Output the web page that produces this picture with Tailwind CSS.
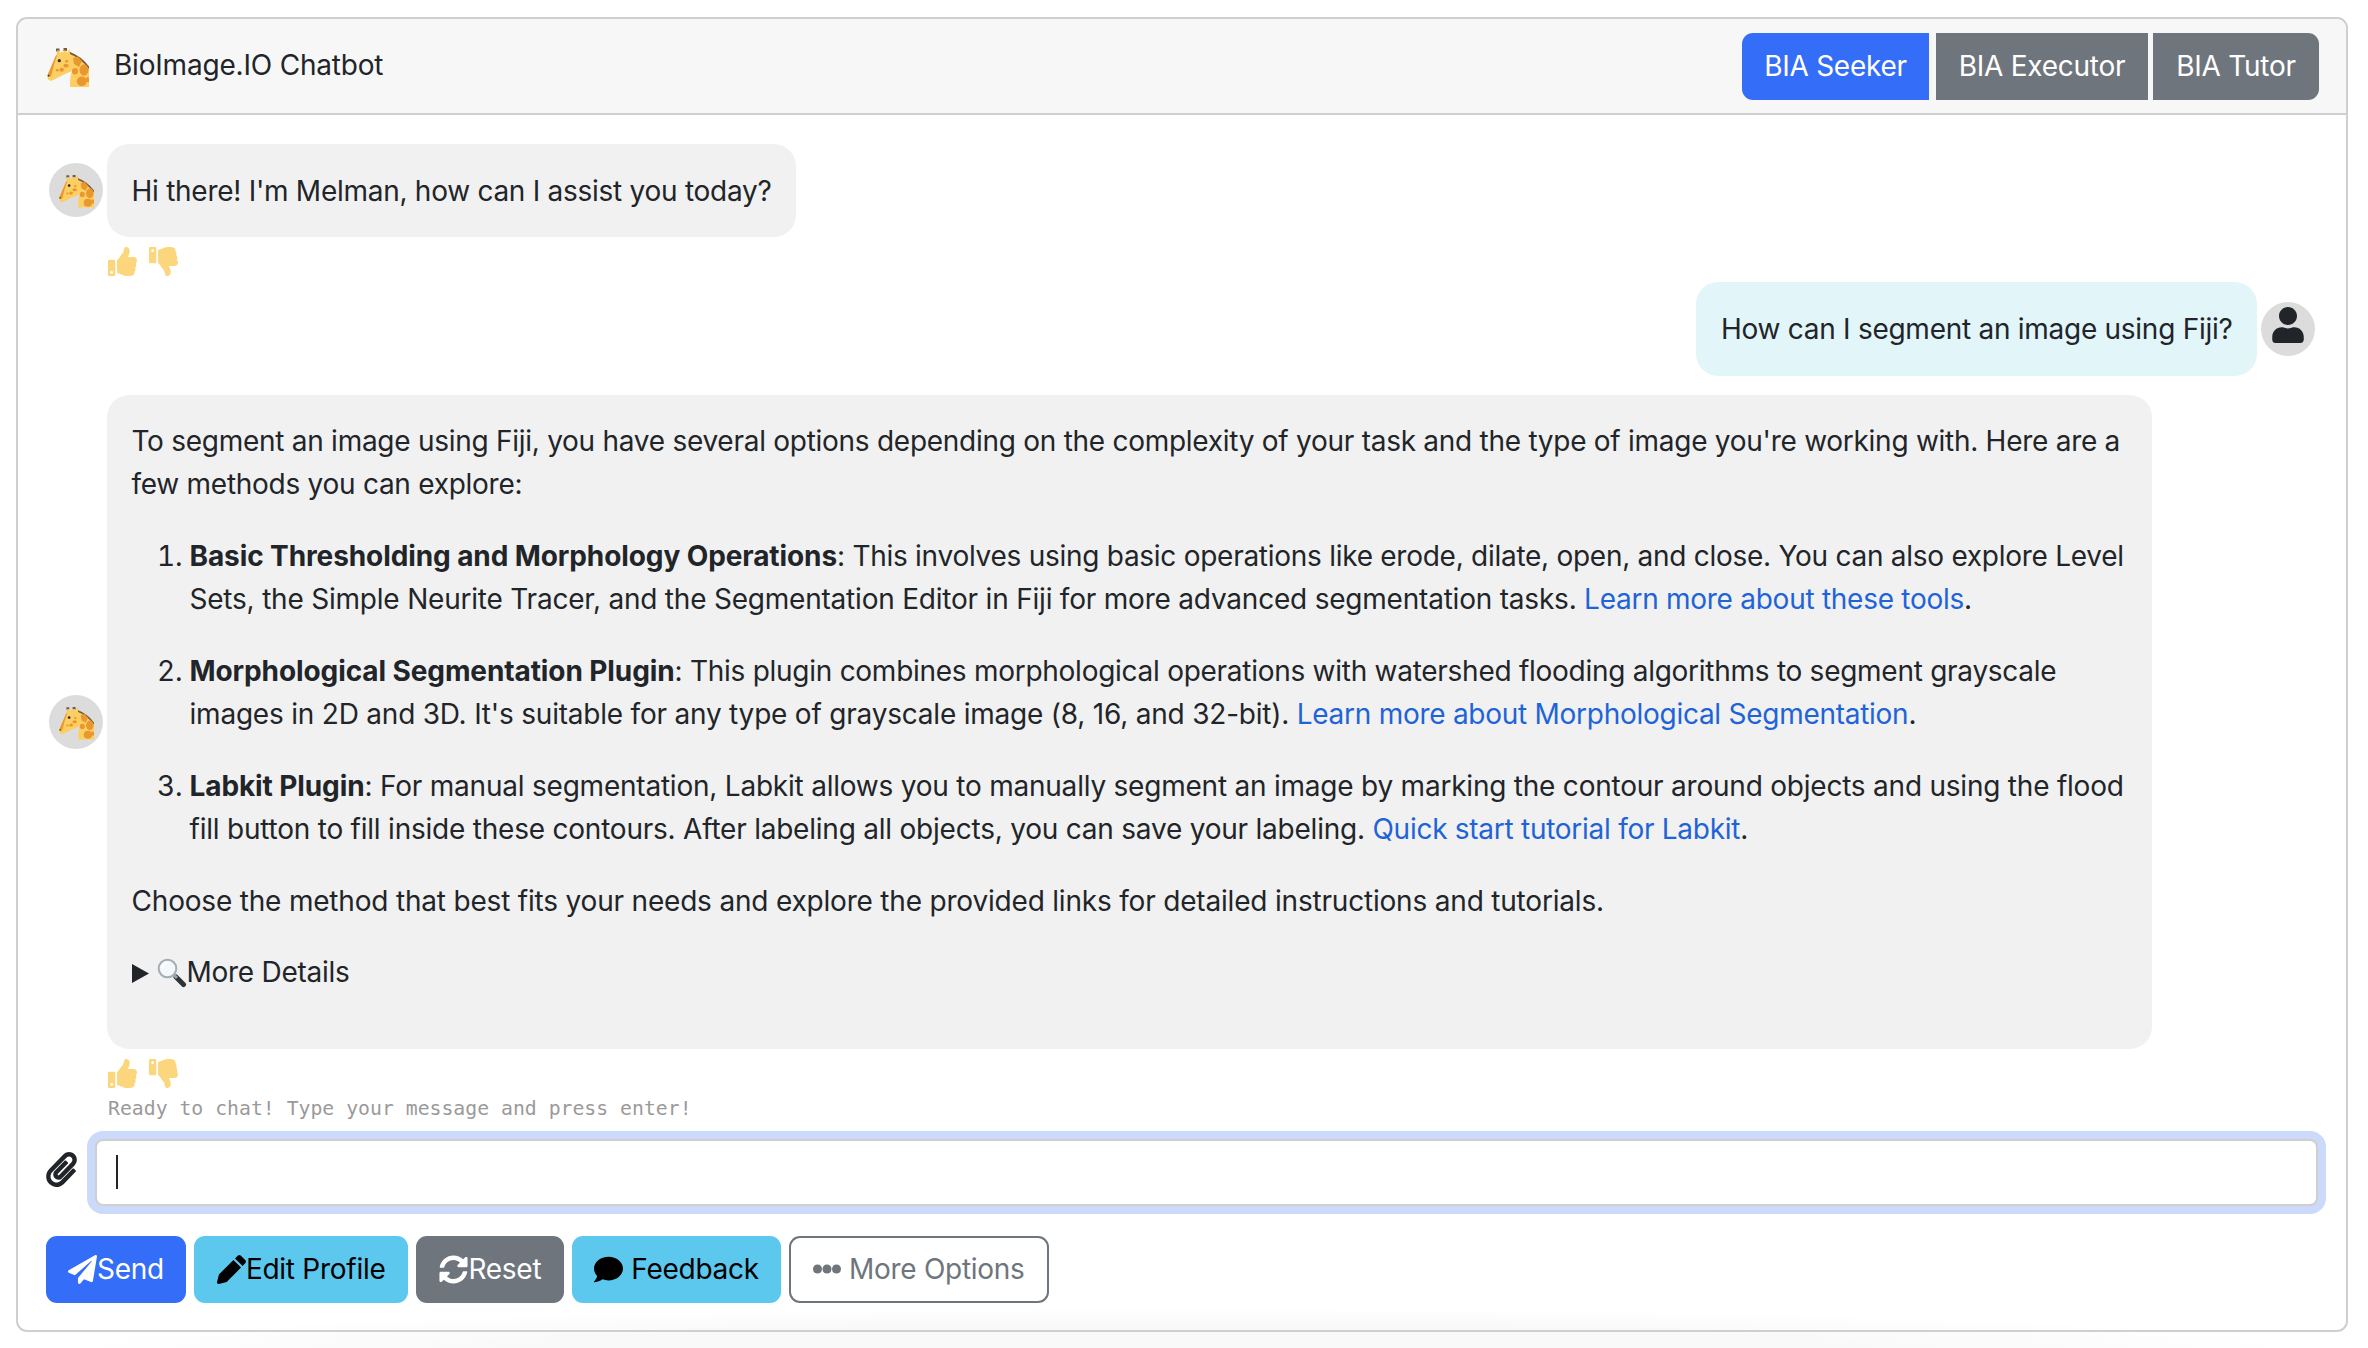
<!DOCTYPE html>
<html lang="en">
<head>
<meta charset="utf-8">
<title>BioImage.IO Chatbot</title>
<script src="https://cdn.jsdelivr.net/npm/@tailwindcss/browser@4"></script>
</head>
<body class="h-[1348px] w-[2368px] overflow-hidden bg-[radial-gradient(ellipse_1120px_40px_at_50%_100%,#f9f9f9_60%,#ffffff)] font-['Inter','Liberation_Sans',sans-serif] text-[28px] leading-[43.5px] tracking-[-0.27px] text-[#212529]">
<div class="mx-[16px] mt-[17px] h-[1315px] w-[2332px] rounded-[11px] border-2 border-[#cfcfcf]">
  <!-- header -->
  <header class="flex h-[96px] items-center justify-between rounded-t-[10px] border-b-2 border-[#cfcfcf] bg-[#f7f7f7] pl-[28px] pr-[27px]">
    <div class="flex items-center gap-[25px]">
      <svg class="h-[42px] w-[43px]" viewBox="0 0 43 42"><path fill="#7b5a3c" d="M10 3.500h3.500v3H10zM17.500 3h3.500v3h-3.500z"/><path fill="#f9c55a" d="M11 5.500h2l.6 5h-2.800zM18 5.500h2l-.4 5h-2.600zM23 3.500l2.200 6-3.200-.8z"/><path fill="#fdcf62" d="M1.300 30.700 9.500 11.500Q12 7 18 6.500 31 7 43 22v20H24.200Q23.500 33 26 26L17.500 29.800 5.700 35.700Q1.500 36 1.300 30.700z"/><path fill="#e9982f" d="M1.300 30.700 9.500 11.500 11.500 9Q7.500 20 5 31.500z"/><path fill="#7b5a3c" d="M24 7Q35 11 43 21.500v2.500Q35 13.500 24 9z"/><g fill="#e9982f"><path d="M27 13 32 11.500 36 16 33 22 28 19z"/><ellipse cx="29" cy="26.300" rx="3" ry="3.200"/><ellipse cx="38" cy="25" rx="4.500" ry="5.800"/><ellipse cx="35.700" cy="36.300" rx="5" ry="4.800"/><ellipse cx="41.500" cy="34.700" rx="1.800" ry="2.600"/><ellipse cx="20" cy="20.700" rx="2.700" ry="1.900"/><ellipse cx="15.700" cy="24.700" rx="2.200" ry="2"/><ellipse cx="11.300" cy="25.300" rx="1.500" ry="1.200"/><ellipse cx="20.700" cy="16.300" rx="1.600" ry="1.300"/></g><circle cx="13.300" cy="15.700" r="1.600" fill="#292f33"/><circle cx="2.600" cy="30.700" r=".9" fill="#292f33"/></svg>
      <span class="tracking-[-0.2px]">BioImage.IO Chatbot</span>
    </div>
    <div class="flex text-white">
      <button class="h-[67px] w-[187px] rounded-l-[11px] bg-[#346df7] pt-[2px]">BIA Seeker</button>
      <button class="ml-[7px] h-[67px] w-[212px] bg-[#6f757c] pt-[2px]">BIA Executor</button>
      <button class="ml-[5px] h-[67px] w-[166px] rounded-r-[11px] bg-[#6f757c] pt-[2px]">BIA Tutor</button>
    </div>
  </header>

  <main class="pl-[31px] pr-[31px]">
    <!-- bot greeting -->
    <div class="mt-[29px] flex items-center gap-[4px]">
      <div class="flex h-[54px] w-[54px] shrink-0 items-center justify-center rounded-full bg-[#dcdcdc]">
        <svg class="h-[36px] w-[36px]" viewBox="0 0 43 42"><path fill="#7b5a3c" d="M10 3.500h3.500v3H10zM17.500 3h3.500v3h-3.500z"/><path fill="#f9c55a" d="M11 5.500h2l.6 5h-2.800zM18 5.500h2l-.4 5h-2.600zM23 3.500l2.200 6-3.200-.8z"/><path fill="#fdcf62" d="M1.300 30.700 9.500 11.500Q12 7 18 6.500 31 7 43 22v20H24.200Q23.500 33 26 26L17.500 29.800 5.700 35.700Q1.500 36 1.300 30.700z"/><path fill="#e9982f" d="M1.300 30.700 9.500 11.500 11.500 9Q7.500 20 5 31.500z"/><path fill="#7b5a3c" d="M24 7Q35 11 43 21.500v2.500Q35 13.500 24 9z"/><g fill="#e9982f"><path d="M27 13 32 11.500 36 16 33 22 28 19z"/><ellipse cx="29" cy="26.300" rx="3" ry="3.200"/><ellipse cx="38" cy="25" rx="4.500" ry="5.800"/><ellipse cx="35.700" cy="36.300" rx="5" ry="4.800"/><ellipse cx="41.500" cy="34.700" rx="1.800" ry="2.600"/><ellipse cx="20" cy="20.700" rx="2.700" ry="1.900"/><ellipse cx="15.700" cy="24.700" rx="2.200" ry="2"/><ellipse cx="11.300" cy="25.300" rx="1.500" ry="1.200"/><ellipse cx="20.700" cy="16.300" rx="1.600" ry="1.300"/></g><circle cx="13.300" cy="15.700" r="1.600" fill="#292f33"/><circle cx="2.600" cy="30.700" r=".9" fill="#292f33"/></svg>
      </div>
      <div class="rounded-[22px] bg-[#f1f1f1] px-[24.500px] pb-[23.300px] pt-[26px]">Hi there! I'm Melman, how can I assist you today?</div>
    </div>
    <div class="ml-[59px] flex h-[45px] items-start gap-[12px] pt-[10px] text-[#fcd67c]">
      <svg class="h-[29px] w-[29px]" viewBox="0 0 512 512" fill="currentColor"><path d="M104 224H24c-13.255 0-24 10.745-24 24v240c0 13.255 10.745 24 24 24h80c13.255 0 24-10.745 24-24V248c0-13.255-10.745-24-24-24zM64 472c-13.255 0-24-10.745-24-24s10.745-24 24-24 24 10.745 24 24-10.745 24-24 24zM384 81.452c0 42.416-25.97 66.208-33.277 94.548h101.723c33.397 0 59.397 27.746 59.553 58.098.084 17.938-7.546 37.249-19.439 49.197l-.11.11c9.836 23.337 8.237 56.037-9.308 79.469 8.681 25.895-.069 57.704-16.382 74.757 4.298 17.598 2.244 32.575-6.148 44.632C440.202 511.587 389.616 512 346.839 512l-2.845-.001c-48.287-.017-87.806-17.598-119.56-31.725-15.957-7.099-36.821-15.887-52.651-16.178-6.54-.12-11.783-5.457-11.783-11.998v-213.77c0-3.2 1.282-6.271 3.558-8.521 39.614-39.144 56.648-80.587 89.117-113.111 14.804-14.832 20.188-37.236 25.393-58.902C282.515 39.293 291.817 0 312 0c24 0 72 8 72 81.452z"/></svg>
      <svg class="h-[29px] w-[29px]" viewBox="0 0 512 512" fill="currentColor"><path transform="matrix(1 0 0 -1 0 512)" d="M104 224H24c-13.255 0-24 10.745-24 24v240c0 13.255 10.745 24 24 24h80c13.255 0 24-10.745 24-24V248c0-13.255-10.745-24-24-24zM64 472c-13.255 0-24-10.745-24-24s10.745-24 24-24 24 10.745 24 24-10.745 24-24 24zM384 81.452c0 42.416-25.97 66.208-33.277 94.548h101.723c33.397 0 59.397 27.746 59.553 58.098.084 17.938-7.546 37.249-19.439 49.197l-.11.11c9.836 23.337 8.237 56.037-9.308 79.469 8.681 25.895-.069 57.704-16.382 74.757 4.298 17.598 2.244 32.575-6.148 44.632C440.202 511.587 389.616 512 346.839 512l-2.845-.001c-48.287-.017-87.806-17.598-119.56-31.725-15.957-7.099-36.821-15.887-52.651-16.178-6.54-.12-11.783-5.457-11.783-11.998v-213.77c0-3.2 1.282-6.271 3.558-8.521 39.614-39.144 56.648-80.587 89.117-113.111 14.804-14.832 20.188-37.236 25.393-58.902C282.515 39.293 291.817 0 312 0c24 0 72 8 72 81.452z"/></svg>
    </div>

    <!-- user message -->
    <div class="flex items-center justify-end gap-[4px]">
      <div class="rounded-[22px] bg-[#e2f6fa] px-[24.500px] pb-[23.800px] pt-[26.500px]">How can I segment an image using Fiji?</div>
      <div class="flex h-[54px] w-[54px] shrink-0 items-center justify-center rounded-full bg-[#dcdcdc]">
        <svg class="mb-[8px] h-[36px] w-[32px]" viewBox="0 0 448 512" fill="#212529"><path d="M224 256c70.700 0 128-57.300 128-128S294.700 0 224 0 96 57.300 96 128s57.300 128 128 128zm89.600 32h-16.700c-22.200 10.200-46.900 16-72.900 16s-50.600-5.800-72.900-16h-16.700C60.200 288 0 348.200 0 422.400V464c0 26.500 21.500 48 48 48h352c26.500 0 48-21.500 48-48v-41.600c0-74.200-60.200-134.400-134.400-134.400z"/></svg>
      </div>
    </div>

    <!-- bot answer -->
    <div class="mt-[19px] flex items-center gap-[4px]">
      <div class="flex h-[54px] w-[54px] shrink-0 items-center justify-center rounded-full bg-[#dcdcdc]">
        <svg class="h-[36px] w-[36px]" viewBox="0 0 43 42"><path fill="#7b5a3c" d="M10 3.500h3.500v3H10zM17.500 3h3.500v3h-3.500z"/><path fill="#f9c55a" d="M11 5.500h2l.6 5h-2.800zM18 5.500h2l-.4 5h-2.600zM23 3.500l2.200 6-3.200-.8z"/><path fill="#fdcf62" d="M1.300 30.700 9.500 11.500Q12 7 18 6.500 31 7 43 22v20H24.200Q23.500 33 26 26L17.500 29.800 5.700 35.700Q1.500 36 1.300 30.700z"/><path fill="#e9982f" d="M1.300 30.700 9.500 11.500 11.500 9Q7.500 20 5 31.500z"/><path fill="#7b5a3c" d="M24 7Q35 11 43 21.500v2.500Q35 13.500 24 9z"/><g fill="#e9982f"><path d="M27 13 32 11.500 36 16 33 22 28 19z"/><ellipse cx="29" cy="26.300" rx="3" ry="3.200"/><ellipse cx="38" cy="25" rx="4.500" ry="5.800"/><ellipse cx="35.700" cy="36.300" rx="5" ry="4.800"/><ellipse cx="41.500" cy="34.700" rx="1.800" ry="2.600"/><ellipse cx="20" cy="20.700" rx="2.700" ry="1.900"/><ellipse cx="15.700" cy="24.700" rx="2.200" ry="2"/><ellipse cx="11.300" cy="25.300" rx="1.500" ry="1.200"/><ellipse cx="20.700" cy="16.300" rx="1.600" ry="1.300"/></g><circle cx="13.300" cy="15.700" r="1.600" fill="#292f33"/><circle cx="2.600" cy="30.700" r=".9" fill="#292f33"/></svg>
      </div>
      <div class="w-[2045px] rounded-[22px] bg-[#f1f1f1] px-[24.500px] pb-[24px] pt-[25.300px]">
        <p class="mb-[28px]">To segment an image using Fiji, you have several options depending on the complexity of your task and the type of image you're working with. Here are a few methods you can explore:</p>
        <ol class="mb-[28px] list-decimal pl-[58px]">
          <li class="mb-[28px]"><strong class="font-bold tracking-[-0.1px]">Basic Thresholding and Morphology Operations</strong>: This involves using basic operations like erode, dilate, open, and close. You can also explore Level <span class="tracking-[-0.21px]">Sets, the Simple Neurite Tracer, and the Segmentation Editor in Fiji for more advanced segmentation tasks.</span> <a class="text-[#1f63d8]" href="#">Learn more about these tools</a>.</li>
          <li class="mb-[28px]"><strong class="font-bold tracking-[-0.1px]">Morphological Segmentation Plugin</strong>: This plugin combines morphological operations with watershed flooding algorithms to segment grayscale <span class="tracking-[-0.21px]">images in 2D and 3D. It's suitable for any type of grayscale image (8, 16, and 32-bit).</span> <a class="text-[#1f63d8]" href="#">Learn more about Morphological Segmentation</a>.</li>
          <li><strong class="font-bold tracking-[-0.1px]">Labkit Plugin</strong><span class="tracking-[-0.22px]">: For manual segmentation, Labkit allows you to manually segment an image by marking the contour around objects and using the flood fill button to fill inside these contours. After labeling all objects, you can save your labeling.</span> <a class="text-[#1f63d8]" href="#">Quick start tutorial for Labkit</a>.</li>
        </ol>
        <p class="mb-[28px] tracking-[-0.19px]">Choose the method that best fits your needs and explore the provided links for detailed instructions and tutorials.</p>
        <div class="mb-[30px] flex items-center">
          <svg class="mr-[8px] h-[19px] w-[17px]" viewBox="0 0 17 19" fill="#212529"><path d="M0 0 17 9.500 0 19z"/></svg>
          <svg class="h-[30px] w-[30px]" viewBox="0 0 30 30"><path d="M19 19 26.500 26.500" stroke="#2f3336" stroke-width="5" stroke-linecap="round"/><path d="M17 17 20 20" stroke="#9aa4ab" stroke-width="3"/><circle cx="10.500" cy="10.500" r="8.800" fill="#f4f8fb" stroke="#a3adb4" stroke-width="2"/><path d="M5 10a6 6 0 0 1 5-5" fill="none" stroke="#ffffff" stroke-width="2"/></svg>
          <span>More Details</span>
        </div>
      </div>
    </div>
    <div class="ml-[59px] flex h-[45px] items-start gap-[12px] pt-[10px] text-[#fcd67c]">
      <svg class="h-[29px] w-[29px]" viewBox="0 0 512 512" fill="currentColor"><path d="M104 224H24c-13.255 0-24 10.745-24 24v240c0 13.255 10.745 24 24 24h80c13.255 0 24-10.745 24-24V248c0-13.255-10.745-24-24-24zM64 472c-13.255 0-24-10.745-24-24s10.745-24 24-24 24 10.745 24 24-10.745 24-24 24zM384 81.452c0 42.416-25.97 66.208-33.277 94.548h101.723c33.397 0 59.397 27.746 59.553 58.098.084 17.938-7.546 37.249-19.439 49.197l-.11.11c9.836 23.337 8.237 56.037-9.308 79.469 8.681 25.895-.069 57.704-16.382 74.757 4.298 17.598 2.244 32.575-6.148 44.632C440.202 511.587 389.616 512 346.839 512l-2.845-.001c-48.287-.017-87.806-17.598-119.56-31.725-15.957-7.099-36.821-15.887-52.651-16.178-6.54-.12-11.783-5.457-11.783-11.998v-213.77c0-3.2 1.282-6.271 3.558-8.521 39.614-39.144 56.648-80.587 89.117-113.111 14.804-14.832 20.188-37.236 25.393-58.902C282.515 39.293 291.817 0 312 0c24 0 72 8 72 81.452z"/></svg>
      <svg class="h-[29px] w-[29px]" viewBox="0 0 512 512" fill="currentColor"><path transform="matrix(1 0 0 -1 0 512)" d="M104 224H24c-13.255 0-24 10.745-24 24v240c0 13.255 10.745 24 24 24h80c13.255 0 24-10.745 24-24V248c0-13.255-10.745-24-24-24zM64 472c-13.255 0-24-10.745-24-24s10.745-24 24-24 24 10.745 24 24-10.745 24-24 24zM384 81.452c0 42.416-25.97 66.208-33.277 94.548h101.723c33.397 0 59.397 27.746 59.553 58.098.084 17.938-7.546 37.249-19.439 49.197l-.11.11c9.836 23.337 8.237 56.037-9.308 79.469 8.681 25.895-.069 57.704-16.382 74.757 4.298 17.598 2.244 32.575-6.148 44.632C440.202 511.587 389.616 512 346.839 512l-2.845-.001c-48.287-.017-87.806-17.598-119.56-31.725-15.957-7.099-36.821-15.887-52.651-16.178-6.54-.12-11.783-5.457-11.783-11.998v-213.77c0-3.2 1.282-6.271 3.558-8.521 39.614-39.144 56.648-80.587 89.117-113.111 14.804-14.832 20.188-37.236 25.393-58.902C282.515 39.293 291.817 0 312 0c24 0 72 8 72 81.452z"/></svg>
    </div>
    <div class="ml-[59px] h-[45px] pt-[3px] font-['DejaVu_Sans_Mono',monospace] text-[19.800px] leading-[24px] tracking-normal text-[#9a9a9a]">Ready to chat! Type your message and press enter!</div>
  </main>

  <!-- input -->
  <div class="ml-[28px] flex items-start">
    <svg class="mt-[13px] h-[35px] w-[31px]" viewBox="0 0 448 512" fill="#212529"><path d="M43.246 466.142c-58.43-60.289-57.341-157.511 1.386-217.581L254.392 34c44.316-45.332 116.351-45.336 160.671 0 43.89 44.894 43.943 117.329 0 162.276L232.214 383.128c-29.855 30.537-78.633 30.111-107.982-.998-28.275-29.97-27.368-77.473 1.452-106.953l143.743-146.835c6.182-6.314 16.312-6.422 22.626-.241l22.861 22.379c6.315 6.182 6.422 16.312.241 22.626L171.427 319.927c-4.932 5.045-5.236 13.428-.648 18.292 4.372 4.634 11.245 4.711 15.688.165l182.849-186.851c19.613-20.062 19.613-52.725-.011-72.798-19.189-19.627-49.957-19.637-69.154 0L90.390 293.295c-34.763 35.560-35.299 93.120-1.191 128.313 34.010 35.093 88.985 35.137 123.058.286l172.060-175.999c6.177-6.319 16.307-6.433 22.626-.256l22.877 22.364c6.319 6.177 6.434 16.307.256 22.626l-172.060 175.998c-59.576 60.938-155.943 60.216-214.770-.485z"/></svg>
    <div class="ml-[18px] flex h-[67px] w-[2223px] items-center rounded-[8px] border-2 border-[#cfcfcf] bg-white pl-[19px] shadow-[0_0_0_8px_#cbd9fb]">
      <div class="h-[34px] w-[2px] bg-[#212529]"></div>
    </div>
  </div>

  <!-- actions -->
  <div class="ml-[28px] mt-[30px] flex gap-[8px]">
    <button class="flex h-[67px] items-center rounded-[11px] bg-[#346df7] px-[22px] text-white">
      <svg class="h-[29px] w-[29px]" viewBox="0 0 512 512" fill="currentColor"><path d="M476 3.200L12.500 270.600c-18.100 10.400-15.800 35.600 2.200 43.200L121 358.400l287.300-253.200c5.500-4.900 13.300 2.600 8.600 8.300L176 407v80.500c0 23.600 28.500 32.900 42.500 15.800L282 426l124.600 52.200c14.200 6 30.400-2.900 33-18.200l72-432C515 7.800 493.300-6.800 476 3.200z"/></svg>
      <span>Send</span>
    </button>
    <button class="flex h-[67px] items-center rounded-[11px] bg-[#5cc8ee] px-[23px] text-black">
      <svg class="h-[29px] w-[29px]" viewBox="0 0 512 512" fill="currentColor"><path d="M290 88 424 222 180 466Q170 476 156 480L32 512Q4 516 0 480L30 356Q34 342 46 332zM318 60 370 10Q394-8 418 10L502 94Q520 118 502 142L452 194z"/></svg>
      <span>Edit Profile</span>
    </button>
    <button class="flex h-[67px] items-center rounded-[11px] bg-[#6f757c] px-[23px] text-white">
      <svg class="h-[29px] w-[29px]" viewBox="0 0 512 512" fill="currentColor"><path d="M370.720 133.280C339.458 104.008 298.888 87.962 255.848 88c-77.458.068-144.328 53.178-162.791 126.850-1.344 5.363-6.122 9.150-11.651 9.150H24.103c-7.498 0-13.194-6.807-11.807-14.176C33.933 94.924 134.813 8 256 8c66.448 0 126.791 26.136 171.315 68.685L463.030 40.970C478.149 25.851 504 36.559 504 57.941V192c0 13.255-10.745 24-24 24H345.941c-21.382 0-32.090-25.851-16.971-40.971l41.750-41.749zM32 296h134.059c21.382 0 32.090 25.851 16.971 40.971l-41.750 41.750c31.262 29.273 71.835 45.319 114.876 45.280 77.418-.07 144.315-53.144 162.787-126.849 1.344-5.363 6.122-9.150 11.651-9.150h57.304c7.498 0 13.194 6.807 11.807 14.176C478.067 417.076 377.187 504 256 504c-66.448 0-126.791-26.136-171.315-68.685L48.970 471.030C33.851 486.149 8 475.441 8 454.059V320c0-13.255 10.745-24 24-24z"/></svg>
      <span>Reset</span>
    </button>
    <button class="flex h-[67px] items-center rounded-[11px] bg-[#5cc8ee] px-[22px] text-black">
      <svg class="mr-[8px] h-[29px] w-[29px]" viewBox="0 0 512 512" fill="currentColor"><path d="M256 32C114.600 32 0 125.100 0 240c0 49.600 21.400 95 57 130.700C44.500 421.100 2.700 466 2.200 466.500c-2.200 2.300-2.800 5.700-1.500 8.700S4.800 480 8 480c66.300 0 116-31.800 140.600-51.400 32.700 12.300 69 19.400 107.400 19.400 141.400 0 256-93.100 256-208S397.400 32 256 32z"/></svg>
      <span>Feedback</span>
    </button>
    <button class="flex h-[67px] items-center rounded-[11px] border-2 border-[#6f757c] bg-white px-[22px] text-[#6f757c]">
      <svg class="mr-[8px] h-[12px] w-[28px]" viewBox="0 0 28 12" fill="currentColor"><circle cx="4.500" cy="6" r="4.500"/><circle cx="14" cy="6" r="4.500"/><circle cx="23.500" cy="6" r="4.500"/></svg>
      <span>More Options</span>
    </button>
  </div>
</div>
</body>
</html>
